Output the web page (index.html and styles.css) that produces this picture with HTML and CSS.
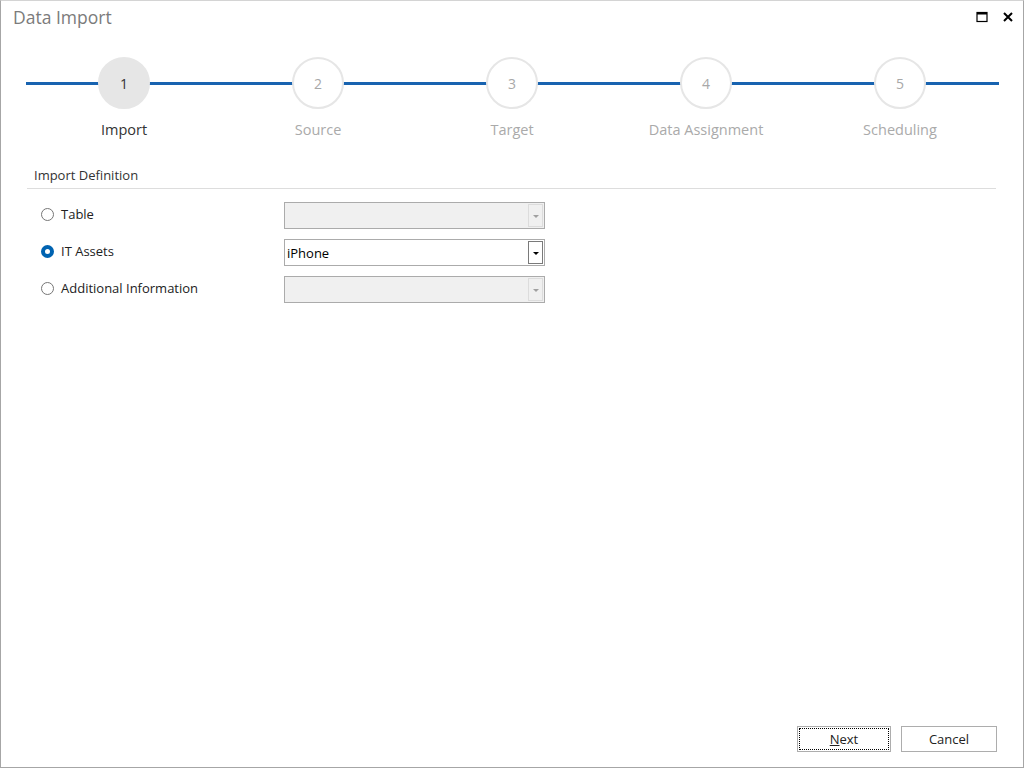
FILE: index.html
```html
<!DOCTYPE html>
<html lang="en">
<head>
    <meta charset="UTF-8">
    <title>Data Import</title>
    <link rel="stylesheet" href="styles.css">
</head>
<body>

    <!-- Dialog window -->
    <div class="window">
        <!-- Title bar -->
        <div class="title-bar">
            <span class="title">Data Import</span>
            <div class="window-buttons">
                <svg class="win-icon" width="12" height="12" viewBox="0 0 12 12">
                    <rect x="1" y="1.5" width="10" height="9" fill="none" stroke="#000" stroke-width="1.2"/>
                    <rect x="1" y="1" width="10" height="2.5" fill="#000"/>
                </svg>
                <svg class="win-icon" width="12" height="12" viewBox="0 0 12 12">
                    <path d="M2 2 L10 10 M10 2 L2 10" stroke="#000" stroke-width="2"/>
                </svg>
            </div>
        </div>

        <!-- Wizard steps -->
        <div class="steps">
            <div class="step active">
                <div class="step-circle">1</div>
                <div class="step-label">Import</div>
            </div>
            <div class="step">
                <div class="step-circle">2</div>
                <div class="step-label">Source</div>
            </div>
            <div class="step">
                <div class="step-circle">3</div>
                <div class="step-label">Target</div>
            </div>
            <div class="step">
                <div class="step-circle">4</div>
                <div class="step-label">Data Assignment</div>
            </div>
            <div class="step">
                <div class="step-circle">5</div>
                <div class="step-label">Scheduling</div>
            </div>
        </div>

        <!-- Import definition -->
        <div class="section">
            <div class="section-title">Import Definition</div>

            <div class="option-row">
                <label class="option">
                    <span class="radio"></span>
                    Table
                </label>
                <div class="combo disabled">
                    <span class="combo-text"></span>
                    <span class="combo-button"><span class="arrow"></span></span>
                </div>
            </div>

            <div class="option-row">
                <label class="option">
                    <span class="radio checked"></span>
                    IT Assets
                </label>
                <div class="combo">
                    <span class="combo-text">iPhone</span>
                    <span class="combo-button"><span class="arrow"></span></span>
                </div>
            </div>

            <div class="option-row">
                <label class="option">
                    <span class="radio"></span>
                    Additional Information
                </label>
                <div class="combo disabled">
                    <span class="combo-text"></span>
                    <span class="combo-button"><span class="arrow"></span></span>
                </div>
            </div>
        </div>

        <!-- Footer buttons -->
        <div class="footer">
            <button class="btn btn-default"><span><u>N</u>ext</span></button>
            <button class="btn"><span>Cancel</span></button>
        </div>
    </div>

</body>
</html>
```

FILE: styles.css
```css
/* Page */
body {
    margin: 0;
    padding: 0;
    font-family: 'Open Sans', 'Noto Sans', sans-serif;
    background: #fff;
    color: #222;
}

/* Window frame */
.window {
    width: 1024px;
    height: 768px;
    box-sizing: border-box;
    border: 1px solid #a6a6a6;
    border-top-color: #d4d4d4;
    display: flex;
    flex-direction: column;
    background: #fff;
}

/* Title bar */
.title-bar {
    height: 34px;
    display: flex;
    align-items: center;
    justify-content: space-between;
    padding: 0 9px 0 12px;
}

.title {
    font-size: 17.5px;
    color: #7b7b7b;
    margin-top: -3px;
}

.window-buttons {
    display: flex;
    gap: 14px;
    align-items: center;
    margin-top: -3px;
}

/* Wizard steps */
.steps {
    position: relative;
    display: flex;
    padding-left: 26px;
    margin-top: 22px;
}

.steps::before {
    content: "";
    position: absolute;
    left: 25px;
    right: 24px;
    top: 25px;
    height: 3px;
    background: #1863b0;
}

.step {
    position: relative;
    width: 194px;
    display: flex;
    flex-direction: column;
    align-items: center;
}

.step-circle {
    width: 48px;
    height: 48px;
    border: 2px solid #e6e6e6;
    border-radius: 50%;
    background: #fff;
    display: flex;
    align-items: center;
    justify-content: center;
    font-size: 14px;
    color: #a8a8a8;
}

.step.active .step-circle {
    background: #e6e6e6;
    color: #333;
}

.step-label {
    margin-top: 11px;
    font-size: 14.5px;
    color: #aaa;
}

.step.active .step-label {
    color: #333;
}

/* Import definition section */
.section {
    margin: 27px 27px 0 26px;
}

.section-title {
    font-size: 13px;
    color: #333;
    padding: 0 0 4px 7px;
    border-bottom: 1px solid #ddd;
}

.option-row {
    display: flex;
    align-items: center;
    margin-top: 13px;
}

.option-row + .option-row {
    margin-top: 10px;
}

.option {
    width: 243px;
    display: flex;
    align-items: center;
    font-size: 13px;
    color: #222;
    padding-left: 14px;
    margin-top: -3px;
}

.radio {
    width: 11px;
    height: 11px;
    border: 1px solid #767676;
    border-radius: 50%;
    background: #fff;
    margin-right: 7px;
}

.radio.checked {
    width: 5px;
    height: 5px;
    border: 4px solid #0063b1;
}

/* Combo boxes */
.combo {
    width: 259px;
    height: 25px;
    border: 1px solid #ababab;
    background: #fff;
    display: flex;
    align-items: center;
    justify-content: space-between;
}

.combo.disabled {
    background: #f0f0f0;
}

.combo-text {
    font-size: 13px;
    padding-left: 2px;
    color: #000;
}

.combo-button {
    width: 13px;
    height: 21px;
    margin-right: 1px;
    border: 1px solid #7a7a7a;
    background: #fff;
    display: flex;
    align-items: center;
    justify-content: center;
}

.combo.disabled .combo-button {
    border-color: #dcdcdc;
    background: #f0f0f0;
}

.arrow {
    width: 0;
    height: 0;
    border-left: 3px solid transparent;
    border-right: 3px solid transparent;
    border-top: 3px solid #000;
    margin-top: 1px;
}

.combo.disabled .arrow {
    border-top-color: #a0a0a0;
}

/* Footer buttons */
.footer {
    margin-top: auto;
    display: flex;
    justify-content: flex-end;
    gap: 10px;
    padding: 0 26px 15px 0;
}

.btn {
    width: 96px;
    height: 26px;
    border: 1px solid #adadad;
    background: #fff;
    padding: 1px;
    font-family: 'Open Sans', 'Noto Sans', sans-serif;
    font-size: 13px;
    color: #222;
    cursor: pointer;
}

.btn span {
    display: flex;
    align-items: center;
    justify-content: center;
    height: 100%;
    box-sizing: border-box;
    border: 1px solid transparent;
}

.btn-default {
    width: 94px;
}

.btn-default span {
    border: 1px dotted #000;
}
```
